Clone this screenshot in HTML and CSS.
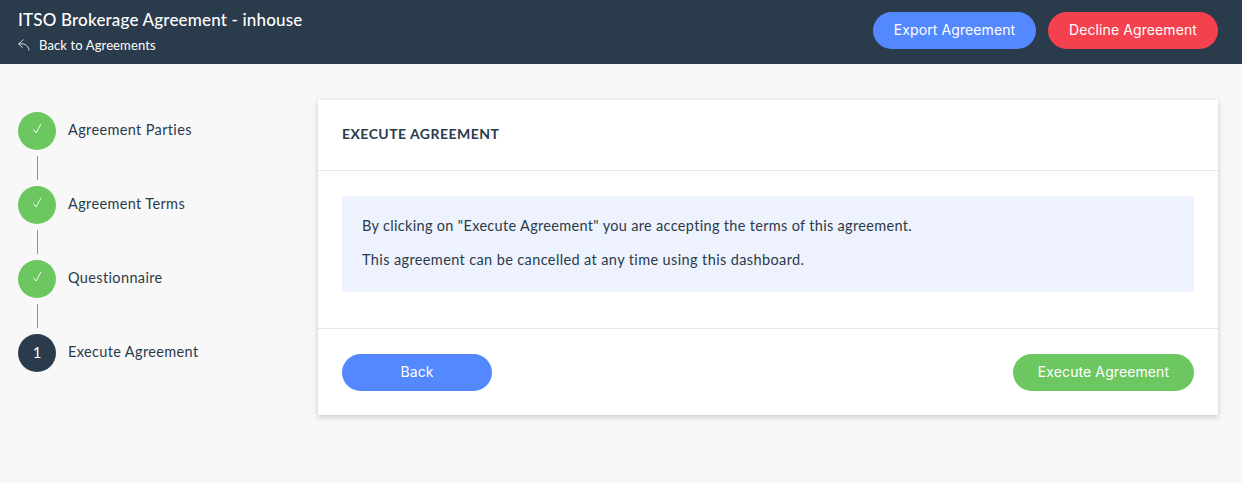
FILE: index.html
```html
<!DOCTYPE html>
<html lang="en">
<head>
    <meta charset="UTF-8">
    <meta name="viewport" content="width=device-width, initial-scale=1.0">
    <title>ITSO Brokerage Agreement</title>
    <link rel="stylesheet" href="styles.css">
</head>
<body>
    <header class="topbar">
        <div class="topbar-title">
            <h1>ITSO Brokerage Agreement - inhouse</h1>
            <a class="back-link" href="#">
                <svg class="back-icon" viewBox="0 0 12 12" width="12" height="12" aria-hidden="true">
                    <path d="M5.5 0.5 L0.7 5 L4.5 8.5 M0.7 5 C5 4 10 5.5 11.2 11.5" fill="none" stroke="#fff" stroke-width="0.8"/>
                </svg>
                Back to Agreements
            </a>
        </div>
        <div class="topbar-actions">
            <button class="btn btn-blue btn-export">Export Agreement</button>
            <button class="btn btn-red btn-decline">Decline Agreement</button>
        </div>
    </header>

    <main class="page">
        <ul class="steps">
            <li class="step">
                <span class="step-circle done">
                    <svg class="check" viewBox="0 0 38 38" width="38" height="38" aria-hidden="true"><path d="M15.5 17.5 L18 21 L23 12"/></svg>
                </span>
                <span class="step-label">Agreement Parties</span>
            </li>
            <li class="step">
                <span class="step-circle done">
                    <svg class="check" viewBox="0 0 38 38" width="38" height="38" aria-hidden="true"><path d="M15.5 17.5 L18 21 L23 12"/></svg>
                </span>
                <span class="step-label">Agreement Terms</span>
            </li>
            <li class="step">
                <span class="step-circle done">
                    <svg class="check" viewBox="0 0 38 38" width="38" height="38" aria-hidden="true"><path d="M15.5 17.5 L18 21 L23 12"/></svg>
                </span>
                <span class="step-label">Questionnaire</span>
            </li>
            <li class="step">
                <span class="step-circle current">1</span>
                <span class="step-label">Execute Agreement</span>
            </li>
        </ul>

        <section class="card">
            <div class="card-header">
                <h2>EXECUTE AGREEMENT</h2>
            </div>
            <div class="card-body">
                <div class="notice">
                    <p>By clicking on "Execute Agreement" you are accepting the terms of this agreement.</p>
                    <p class="notice-second">This agreement can be cancelled at any time using this dashboard.</p>
                </div>
            </div>
            <div class="card-footer">
                <button class="btn btn-blue btn-back">Back</button>
                <button class="btn btn-green btn-execute">Execute Agreement</button>
            </div>
        </section>
    </main>
</body>
</html>
```

FILE: styles.css
```css
body {
    font-family: Lato, "Liberation Sans", sans-serif;
    margin: 0;
    height: 483px;
    overflow: hidden;
    background-color: #f8f8f8;
    color: #2a3b4c;
}

.topbar {
    display: flex;
    justify-content: space-between;
    align-items: center;
    height: 64px;
    padding: 0 24px 3px 18px;
    box-sizing: border-box;
    background-color: #2a3b4c;
    color: #fff;
}

.topbar h1 {
    margin: 0 0 6px;
    font-size: 17px;
    font-weight: 500;
    line-height: 22px;
    letter-spacing: 0.18px;
}

.back-link {
    display: flex;
    align-items: center;
    gap: 9px;
    font-size: 13px;
    line-height: 16px;
    letter-spacing: 0.12px;
    color: #fff;
    text-decoration: none;
}

.back-icon {
    flex: none;
}

.topbar-actions {
    display: flex;
    gap: 12px;
}

.btn {
    height: 37px;
    padding: 0 0 2px;
    border: none;
    border-radius: 19px;
    color: #fff;
    font-family: Inter, sans-serif;
    font-size: 14px;
    letter-spacing: 0.1px;
    cursor: pointer;
}

.btn-blue {
    background-color: #5488ff;
}

.btn-red {
    background-color: #f3424d;
}

.btn-green {
    background-color: #6dc761;
}

.btn-export {
    width: 163px;
}

.btn-decline {
    width: 170px;
}

.btn-back {
    width: 150px;
}

.btn-execute {
    width: 181px;
}

.page {
    display: flex;
    padding: 36px 24px 0 18px;
}

.steps {
    width: 300px;
    margin: 0;
    padding: 12px 0 0;
    list-style: none;
}

.step {
    display: flex;
    gap: 12px;
    height: 38px;
    margin-bottom: 36px;
    position: relative;
}

/* connector line between steps */
.step + .step::before {
    content: "";
    position: absolute;
    left: 19px;
    top: -30px;
    width: 1px;
    height: 24px;
    background-color: #8793a0;
}

.step-circle {
    display: flex;
    justify-content: center;
    align-items: center;
    flex: none;
    width: 38px;
    height: 38px;
    border-radius: 50%;
    color: #fff;
    font-size: 15px;
    line-height: 36px;
}

.step-circle.done {
    background-color: #6dc761;
}

.step-circle.current {
    padding-bottom: 2px;
    box-sizing: border-box;
    background-color: #2a3b4c;
}

.check path {
    fill: none;
    stroke: #fff;
    stroke-width: 0.9;
}

.step-label {
    font-size: 14.5px;
    line-height: 36px;
    letter-spacing: 0.36px;
}

.card {
    flex: 1;
    height: 315px;
    background-color: #fff;
    box-shadow: 0 2px 6px rgba(0, 0, 0, 0.2);
}

.card-header {
    height: 71px;
    padding: 0 24px;
    box-sizing: border-box;
    border-bottom: 1px solid #e3e6ee;
}

.card-header h2 {
    margin: 0;
    font-size: 14px;
    font-weight: 700;
    line-height: 68px;
    letter-spacing: 0.46px;
}

.card-body {
    height: 158px;
    padding: 25px 24px 0;
    box-sizing: border-box;
    border-bottom: 1px solid #e3e6ee;
}

.notice {
    height: 96px;
    padding: 21px 20px 0;
    box-sizing: border-box;
    border-radius: 4px;
    background-color: #eef2fd;
}

.notice p {
    margin: 0 0 16px;
    font-size: 14.5px;
    line-height: 18px;
    letter-spacing: 0.32px;
}

.notice .notice-second {
    letter-spacing: 0.38px;
}

.card-footer {
    display: flex;
    justify-content: space-between;
    padding: 25px 24px 0;
}
```
